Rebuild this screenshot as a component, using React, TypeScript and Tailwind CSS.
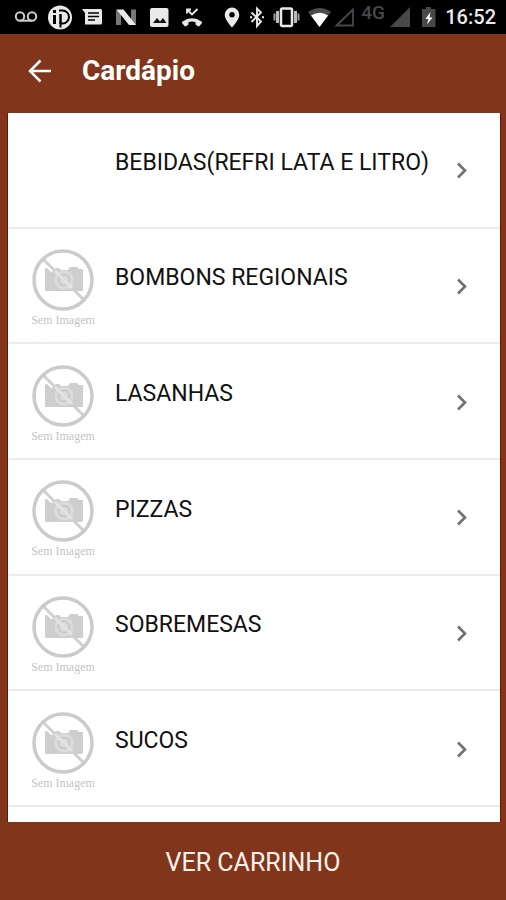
import type { ReactNode } from "react";

const items = [
  { name: "BEBIDAS(REFRI LATA E LITRO)", placeholder: false },
  { name: "BOMBONS REGIONAIS", placeholder: true },
  { name: "LASANHAS", placeholder: true },
  { name: "PIZZAS", placeholder: true },
  { name: "SOBREMESAS", placeholder: true },
  { name: "SUCOS", placeholder: true },
];

function Glyph({ width, children }: { width: number; children: ReactNode }) {
  return (
    <svg width={width} height={34} viewBox={`0 0 ${width} 34`} fill="#e9e9e9" className="shrink-0" aria-hidden="true">
      {children}
    </svg>
  );
}

function StatusBar() {
  return (
    <div className="flex h-[34px] shrink-0 items-center justify-between bg-black pr-[10px] pl-[14px]">
      <div className="flex items-center gap-[10px]">
        <Glyph width={24}>
          <g fill="none" stroke="#cfcfcf" strokeWidth="2">
            <circle cx="6" cy="16.500" r="4.200" />
            <circle cx="18" cy="16.500" r="4.200" />
            <path d="M6 20.700h12" />
          </g>
        </Glyph>
        <Glyph width={24}>
          <circle cx="12" cy="17.500" r="12" />
          <g fill="none" stroke="#000" strokeWidth="2">
            <path d="M11 10.500h3.500a6.500 6.500 0 0 1 0 13h-2v4" />
            <path d="M6.500 15v9M6.500 10v3" strokeWidth="3" />
            <path d="M12.500 14v10" strokeWidth="2.500" />
          </g>
        </Glyph>
        <Glyph width={22}>
          <path d="M0 9h18.500q1.500 0 1.500 1.500v12.500q0 1.500-1.500 1.500H3V13z" />
          <path d="M6 13h11M6 16.500h11M6 20h7" stroke="#000" strokeWidth="1.600" />
        </Glyph>
        <Glyph width={24}>
          <path d="M2 9.500l5 3V25H2zM22 9.500V25l-5-3V9.500z" fill="#777" />
          <path d="M2.500 9.500h7L22 25h-7z" />
        </Glyph>
        <Glyph width={22}>
          <rect x="2" y="8" width="18.500" height="19" rx="2" />
          <path d="M5 23l4-5 3 3.500 3-3.500 3.500 5z" fill="#111" />
        </Glyph>
        <Glyph width={24}>
          <path d="M2 23q-.5-.8.500-1.500 9.500-6.500 19 0 1 .7.500 1.500l-2.500 3q-.7.700-1.500.2l-2.500-1.700v-2.500q-3.500-1-7 0v2.500L6 26.200q-.8.500-1.500-.2z" />
          <path d="M7 13.500V9.500h4M7.500 10l4.500 4.500L17.500 9" fill="none" stroke="#e9e9e9" strokeWidth="1.800" />
        </Glyph>
      </div>
      <div className="flex items-center">
        <Glyph width={25}>
          <path fillRule="evenodd" d="M9 7.500a7.300 7.300 0 0 0-7.300 7.300C1.700 20 9 27.500 9 27.500s7.300-7.500 7.300-12.700A7.300 7.300 0 0 0 9 7.500zm0 4.500a2.700 2.700 0 1 1 0 5.400 2.700 2.700 0 0 1 0-5.400z" />
        </Glyph>
        <Glyph width={23}>
          <path d="M3.500 12.500l9.500 9L9 26V8.500l4 4-9.500 9.500M2 17.300h2M14 17.300h2" fill="none" stroke="#e9e9e9" strokeWidth="1.900" />
        </Glyph>
        <Glyph width={35}>
          <rect x="10" y="8.500" width="11" height="17.500" rx="1.500" fill="none" stroke="#e9e9e9" strokeWidth="2.500" />
          <path d="M6.500 11v12M24.500 11v12" stroke="#bbb" strokeWidth="3" />
          <path d="M3.500 13.500v7M27.500 13.500v7" stroke="#999" strokeWidth="2" />
        </Glyph>
        <Glyph width={27}>
          <path d="M2 12q12-8 23 0L13.500 27z" fill="#4b4b4b" />
          <path d="M5 15.500q9-5.500 17 0L13.500 27z" fill="#fff" />
        </Glyph>
        <Glyph width={28}>
          <path d="M3.500 25.500L20 9.500v16z" fill="none" stroke="#484848" strokeWidth="1.800" />
        </Glyph>
        <span className="w-[28px] pb-[8px] font-['Roboto',sans-serif] text-[19px] leading-[18px] font-medium text-[#484848]">4G</span>
        <Glyph width={32}>
          <path d="M1 27L21 7v20z" fill="#484848" />
        </Glyph>
        <Glyph width={24}>
          <path d="M5 7h5v2h4.500v18H1V9h4z" fill="#484848" />
          <path d="M9.500 12L4.500 19h3L6 24.500l5.500-7h-3z" fill="#fff" />
        </Glyph>
        <span className="font-['Roboto',sans-serif] text-[20px] leading-[24px] font-medium text-[#e9e9e9]">16:52</span>
      </div>
    </div>
  );
}

function NoImage() {
  return (
    <svg width="70" height="86" viewBox="0 0 70 86" role="img" aria-label="Sem Imagem">
      <path d="M16 24q0-1 1-1h13l2 2h7l2-3h7l2 2h3q1 0 1 1v20q0 1-1 1H17q-1 0-1-1z" fill="#cecece" />
      <circle cx="35" cy="35" r="9.500" fill="#dcdcdc" />
      <circle cx="35" cy="35" r="5.500" fill="none" stroke="#c8c8c8" strokeWidth="2" />
      <path d="M15 15l10 10" stroke="#fff" strokeWidth="7" />
      <path d="M14 14l41 41" stroke="#d0d0d0" strokeWidth="3" />
      <path d="M26 26l17 17" stroke="#e4e4e4" strokeWidth="3" />
      <circle cx="34" cy="35" r="29" fill="none" stroke="#cbcbcb" strokeWidth="3.500" />
      <text x="34" y="79" textAnchor="middle" fontSize="12" fill="#c4c4c4" className="font-['Liberation_Serif',serif]">
        Sem Imagem
      </text>
    </svg>
  );
}

export default function App() {
  return (
    <div className="flex h-screen flex-col bg-[#81351b] font-['Roboto',sans-serif]">
      <StatusBar />
      <header className="flex h-[79px] shrink-0 items-center gap-[30px] pb-[6px] pl-[28px]">
        <button type="button" aria-label="Voltar">
          <svg width="24" height="24" viewBox="0 0 24 24" fill="none" stroke="#fff" strokeWidth="2.500" aria-hidden="true">
            <path d="M23 12H2M12.500 1.500L2 12l10.500 10.500" />
          </svg>
        </button>
        <h1 className="text-[28px] leading-[32px] font-bold text-white">Cardápio</h1>
      </header>
      <main className="mr-[5px] ml-[7px] min-h-0 flex-1 overflow-hidden border-x border-[#6d1207] bg-white">
        <ul className="grid min-h-[694px] auto-rows-fr">
          {items.map((item) => (
            <li key={item.name} className="border-b-2 border-[#ebebeb]">
              <button type="button" className="flex h-full w-full items-center pt-[1px] pr-[30px] pl-[21px] text-left">
                <span className="w-[86px] shrink-0 pt-[4px]">{item.placeholder && <NoImage />}</span>
                <span className="flex-1 pb-[15px] text-[23px] leading-[28px] whitespace-nowrap text-[#111]">{item.name}</span>
                <svg width="16" height="20" viewBox="0 0 16 20" fill="none" stroke="#707070" strokeWidth="2.600" className="shrink-0" aria-hidden="true">
                  <path d="M4 3.500l7 7-7 7" />
                </svg>
              </button>
            </li>
          ))}
        </ul>
      </main>
      <button type="button" className="h-[78px] shrink-0 pt-[3px] text-[25px] leading-[32px] text-[#fff3ee]">
        VER CARRINHO
      </button>
    </div>
  );
}
